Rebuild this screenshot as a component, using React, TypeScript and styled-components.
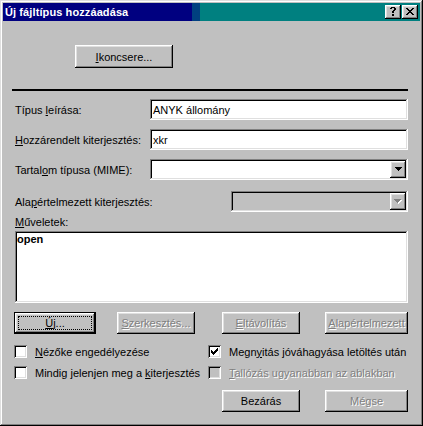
import React from 'react';
import styled, { createGlobalStyle } from 'styled-components';

const GlobalStyle = createGlobalStyle`
  html, body { margin: 0; padding: 0; background: #c0c0c0; }
  body { font-family: "Liberation Sans", Arial, sans-serif; font-size: 11px; color: #000; }
  * { box-sizing: border-box; }
`;

const raised = `box-shadow: inset -1px -1px #000, inset 1px 1px #fff, inset -2px -2px #808080, inset 2px 2px #dfdfdf;`;
const sunken = `box-shadow: inset -1px -1px #fff, inset 1px 1px #808080, inset -2px -2px #dfdfdf, inset 2px 2px #000;`;

const Window = styled.div`
  width: 423px;
  height: 426px;
  padding: 3px;
  background: #c0c0c0;
  box-shadow: inset -1px -1px #000, inset 1px 1px #dfdfdf, inset -2px -2px #808080, inset 2px 2px #fff;
  display: flex;
  flex-direction: column;
`;

const TitleBar = styled.div`
  height: 18px;
  display: flex;
  align-items: center;
  gap: 1px;
  padding: 0 2px;
  background: linear-gradient(to right, #000080 0, #000080 189px, #004080 189px, #004080 197px, #008080 197px);
  color: #fff;
  font-weight: bold;
  font-size: 11px;
`;

const TitleText = styled.span`
  flex: 1;
  white-space: nowrap;
  letter-spacing: 0.1px;
`;

const CaptionButton = styled.div`
  width: 16px;
  height: 14px;
  background: #c0c0c0;
  ${raised}
  display: flex;
  align-items: center;
  justify-content: center;
  padding-right: 1px;
  padding-bottom: 1px;
`;

const Body = styled.div`
  flex: 1;
  display: flex;
  flex-direction: column;
  padding: 24px 12px 0 11px;
`;

const Btn = styled.div<{ $w: number; $h: number; $ml?: number; $def?: boolean; $dis?: boolean }>`
  width: ${p => p.$w}px;
  height: ${p => p.$h}px;
  margin-left: ${p => p.$ml ?? 0}px;
  flex: none;
  background: #c0c0c0;
  ${raised}
  border: ${p => (p.$def ? '1px solid #000' : 'none')};
  display: flex;
  align-items: center;
  justify-content: center;
  color: ${p => (p.$dis ? '#808080' : '#000')};
  text-shadow: ${p => (p.$dis ? '1px 1px #fff' : 'none')};
  white-space: nowrap;
  position: relative;
`;

const FocusRing = styled.div`
  position: absolute;
  inset: 3px;
  border: 1px dotted #000;
`;

const U = styled.span`
  text-decoration: underline;
  text-underline-offset: 1px;
`;

const Separator = styled.div`
  height: 2px;
  background: #000;
  margin: 21px 0 0 -2px;
`;

const FormRow = styled.div<{ $mt: number }>`
  display: flex;
  align-items: center;
  justify-content: space-between;
  height: 21px;
  margin-top: ${p => p.$mt}px;
`;

const Label = styled.div`
  padding-left: 1px;
  white-space: nowrap;
`;

const Field = styled.div<{ $w: number; $dis?: boolean }>`
  width: ${p => p.$w}px;
  height: 21px;
  background: ${p => (p.$dis ? '#c0c0c0' : '#fff')};
  ${sunken}
  display: flex;
  align-items: center;
  padding: 2px 2px 2px 3px;
  white-space: nowrap;
`;

const FieldText = styled.span`
  flex: 1;
`;

const DropButton = styled.div`
  width: 16px;
  height: 17px;
  background: #c0c0c0;
  ${raised}
  display: flex;
  align-items: center;
  justify-content: center;
  padding-bottom: 1px;
`;

const ListLabel = styled.div`
  line-height: 13px;
  height: 13px;
  margin-top: 4px;
  padding-left: 1px;
`;

const ListBox = styled.div`
  height: 72px;
  margin: 2px 0 0 1px;
  background: #fff;
  ${sunken}
  padding: 2px 2px 2px 2px;
`;

const ListItem = styled.div`
  font-weight: bold;
  line-height: 13px;
`;

const ButtonRow = styled.div<{ $mt: number; $end?: boolean }>`
  display: flex;
  justify-content: ${p => (p.$end ? 'flex-end' : 'flex-start')};
  margin-top: ${p => p.$mt}px;
`;

const CheckGrid = styled.div`
  display: grid;
  grid-template-columns: 194px 1fr;
  row-gap: 8px;
  margin-top: 11px;
`;

const CheckItem = styled.div<{ $dis?: boolean }>`
  display: flex;
  align-items: center;
  gap: 8px;
  height: 13px;
  white-space: nowrap;
  color: ${p => (p.$dis ? '#808080' : '#000')};
  text-shadow: ${p => (p.$dis ? '1px 1px #fff' : 'none')};
`;

const CheckBox = styled.div<{ $dis?: boolean }>`
  width: 13px;
  height: 13px;
  flex: none;
  background: ${p => (p.$dis ? '#c0c0c0' : '#fff')};
  box-shadow: inset 1px 1px #808080, inset -1px -1px #fff, inset 2px 2px #000, inset -2px -2px #dfdfdf;
  padding: 3px;
  display: flex;
`;

const PixelIcon: React.FC<{ rows: string[]; color?: string; shadow?: string }> = ({ rows, color = '#000', shadow }) => {
  const w = rows[0].length;
  const h = rows.length;
  const rects: React.ReactNode[] = [];
  const add = (c: string, dx: number, key: string) => {
    rows.forEach((r, y) =>
      r.split('').forEach((ch, x) => {
        if (ch === 'X') rects.push(<rect key={`${key}${x}-${y}`} x={x + dx} y={y + dx} width={1} height={1} fill={c} />);
      })
    );
  };
  if (shadow) add(shadow, 1, 's');
  add(color, 0, 'm');
  return (
    <svg width={w + (shadow ? 1 : 0)} height={h + (shadow ? 1 : 0)} shapeRendering="crispEdges" style={{ display: 'block' }}>
      {rects}
    </svg>
  );
};

const CLOSE = ['XX....XX', '.XX..XX.', '..XXXX..', '...XX...', '..XXXX..', '.XX..XX.', 'XX....XX'];
const HELP = ['..XXXX..', '.XX..XX.', '.....XX.', '....XX..', '...XX...', '...XX...', '........', '...XX...', '...XX...'];
const ARROW = ['XXXXXXX', '.XXXXX.', '..XXX..', '...X...'];
const CHECK = ['......X', '.....XX', 'X...XXX', 'XX.XXX.', 'XXXXX..', '.XXX...', '..X....'];

export default function App() {
  return (
    <>
      <GlobalStyle />
      <Window>
        <TitleBar>
          <TitleText>Új fájltípus hozzáadása</TitleText>
          <CaptionButton>
            <PixelIcon rows={HELP} />
          </CaptionButton>
          <CaptionButton>
            <PixelIcon rows={CLOSE} />
          </CaptionButton>
        </TitleBar>
        <Body>
          <ButtonRow $mt={0}>
            <Btn $w={98} $h={23} $ml={61}>
              <span><U>I</U>koncsere...</span>
            </Btn>
          </ButtonRow>
          <Separator />
          <FormRow $mt={8}>
            <Label>Típus <U>l</U>eírása:</Label>
            <Field $w={258}><FieldText>ANYK állomány</FieldText></Field>
          </FormRow>
          <FormRow $mt={9}>
            <Label><U>H</U>ozzárendelt kiterjesztés:</Label>
            <Field $w={258}><FieldText>xkr</FieldText></Field>
          </FormRow>
          <FormRow $mt={9}>
            <Label>Tartal<U>o</U>m típusa (MIME):</Label>
            <Field $w={258}>
              <FieldText />
              <DropButton><PixelIcon rows={ARROW} /></DropButton>
            </Field>
          </FormRow>
          <FormRow $mt={11}>
            <Label>Ala<U>p</U>értelmezett kiterjesztés:</Label>
            <Field $w={177} $dis>
              <FieldText />
              <DropButton><PixelIcon rows={ARROW} color="#808080" shadow="#fff" /></DropButton>
            </Field>
          </FormRow>
          <ListLabel><U>M</U>űveletek:</ListLabel>
          <ListBox>
            <ListItem>open</ListItem>
          </ListBox>
          <ButtonRow $mt={9}>
            <Btn $w={82} $h={22} $def>
              <FocusRing />
              <span><U>Ú</U>j...</span>
            </Btn>
            <Btn $w={78} $h={22} $ml={21} $dis>
              <span><U>S</U>zerkesztés...</span>
            </Btn>
            <Btn $w={78} $h={22} $ml={27} $dis>
              <span><U>E</U>ltávolítás</span>
            </Btn>
            <Btn $w={83} $h={22} $ml={25} $dis>
              <span><U>A</U>lapértelmezett</span>
            </Btn>
          </ButtonRow>
          <CheckGrid>
            <CheckItem>
              <CheckBox />
              <span><U>N</U>ézőke engedélyezése</span>
            </CheckItem>
            <CheckItem>
              <CheckBox><PixelIcon rows={CHECK} /></CheckBox>
              <span>Megn<U>y</U>itás jóváhagyása letöltés után</span>
            </CheckItem>
            <CheckItem>
              <CheckBox />
              <span>Mindig jelenjen meg a <U>k</U>iterjesztés</span>
            </CheckItem>
            <CheckItem $dis>
              <CheckBox $dis />
              <span><U>T</U>allózás ugyanabban az ablakban</span>
            </CheckItem>
          </CheckGrid>
          <ButtonRow $mt={11} $end>
            <Btn $w={78} $h={22}>
              <span>Bezárás</span>
            </Btn>
            <Btn $w={83} $h={22} $ml={25} $dis>
              <span>Mégse</span>
            </Btn>
          </ButtonRow>
        </Body>
      </Window>
    </>
  );
}
